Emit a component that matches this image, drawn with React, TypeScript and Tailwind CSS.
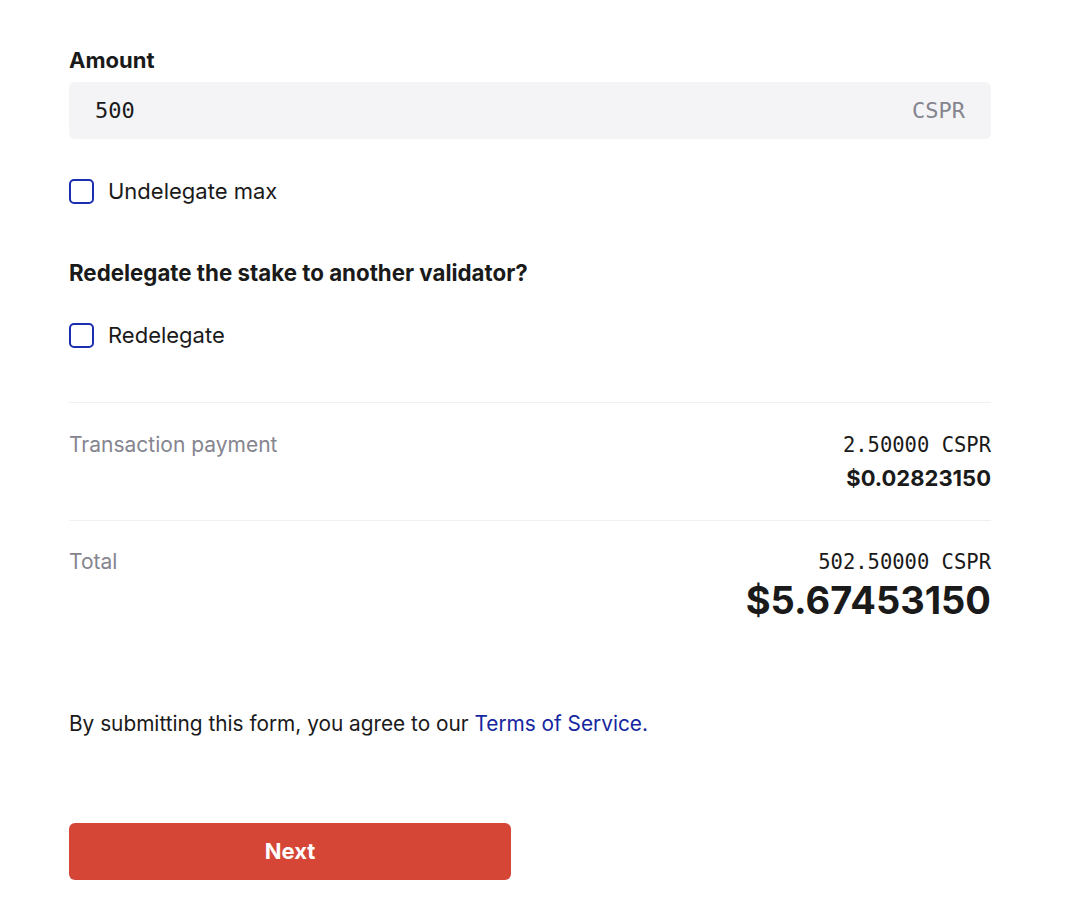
const mono = "font-['DejaVu_Sans_Mono','Liberation_Mono',monospace]";

const Checkbox = ({ label }: { label: string }) => {
  return (
    <label className="flex items-center gap-[14px] h-6 cursor-pointer">
      <span className="w-[25px] h-[25px] rounded-[5px] border-2 border-[#1b2eb0] bg-white"></span>
      <span className="text-[22px] leading-7 text-[#1a1a1a]">{label}</span>
    </label>
  );
};

const App = () => {
  return (
    <section className="w-full min-h-screen bg-white font-['Inter','Liberation_Sans',sans-serif]">
      <div className="flex flex-col w-[922px] ml-[69px] pt-[46px]">
        <h2 className="text-[22px] leading-7 font-bold text-[#1a1a1a] mb-2">Amount</h2>

        <div className="flex items-center justify-between h-[57px] px-[26px] bg-[#f4f4f6] rounded-[6px]">
          <span className={`${mono} text-[22px] text-[#1a1a1a]`}>500</span>
          <span className={`${mono} text-[22px] text-[#85858f]`}>CSPR</span>
        </div>

        <div className="mt-[40px]">
          <Checkbox label="Undelegate max" />
        </div>

        <h2 className="mt-[56px] text-[22.3px] leading-7 font-bold text-[#1a1a1a]">
          Redelegate the stake to another validator?
        </h2>

        <div className="mt-[36px]">
          <Checkbox label="Redelegate" />
        </div>

        {/* Summary */}
        <div className="mt-[55px] border-t border-[#f0f0f2]">
          <div className="flex justify-between pt-[28px] pb-[23px]">
            <span className="text-[21px] leading-7 text-[#85858f]">Transaction payment</span>
            <div className="flex flex-col items-end">
              <span className={`${mono} text-[20.5px] leading-7 text-[#1a1a1a]`}>2.50000 CSPR</span>
              <span className="text-[22px] leading-[38px] font-bold text-[#1a1a1a]">$0.02823150</span>
            </div>
          </div>

          <div className="flex justify-between pt-[27px] border-t border-[#f0f0f2]">
            <span className="text-[21px] leading-7 text-[#85858f]">Total</span>
            <div className="flex flex-col items-end">
              <span className={`${mono} text-[20.5px] leading-7 text-[#1a1a1a]`}>502.50000 CSPR</span>
              <span className="text-[38px] leading-[48px] font-bold text-[#1a1a1a]">$5.67453150</span>
            </div>
          </div>
        </div>

        <p className="mt-[86px] text-[20.8px] leading-7 text-[#1a1a1a]">
          By submitting this form, you agree to our{" "}
          <a href="#" className="text-[#1526a0]">Terms of Service.</a>
        </p>

        <button className="mt-[85px] w-[442px] h-[57px] rounded-[6px] bg-[#d54637] text-white text-[22px] font-bold">
          Next
        </button>
      </div>
    </section>
  );
};

export default App;
